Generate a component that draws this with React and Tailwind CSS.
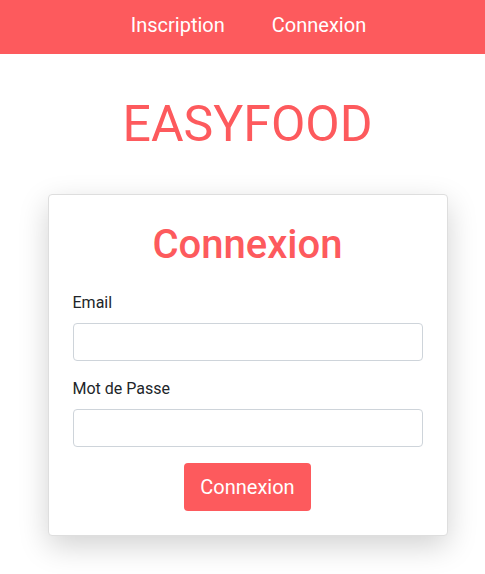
export default function App() {
  return (
    <div className="min-h-screen overflow-hidden bg-white pl-[10px]" style={{ fontFamily: "Roboto, 'Liberation Sans', sans-serif" }}>
      <nav className="-ml-[10px] h-[54px] bg-[#fd5a5d] pl-3 pb-[4px] flex items-center justify-center gap-[47px]">
        <a className="text-[20px] text-white">Inscription</a>
        <a className="text-[20px] text-white">Connexion</a>
      </nav>

      <h1 className="mt-[40px] text-center text-[50px] leading-[1.2] text-[#fd5a5d]">EASYFOOD</h1>

      <div className="mx-auto mt-[40px] w-[400px] rounded border border-[#dedede] bg-white p-6 shadow-[0_10px_30px_rgba(0,0,0,0.18)]">
        <h2 className="mt-[2px] text-center text-[40px] font-medium leading-[1.2] text-[#fd5a5d]">Connexion</h2>
        <form className="mt-[22px] flex flex-col">
          <label className="mb-2 text-[16px] text-[#212529]">Email</label>
          <input type="email" className="h-[38px] w-full rounded border border-[#ced4da] px-3" />
          <label className="mt-4 mb-2 text-[16px] text-[#212529]">Mot de Passe</label>
          <input type="password" className="h-[38px] w-full rounded border border-[#ced4da] px-3" />
          <div className="mt-4 flex justify-center">
            <button type="button" className="h-12 rounded bg-[#fd5a5d] px-4 text-[20px] text-white">Connexion</button>
          </div>
        </form>
      </div>
    </div>
  );
}
